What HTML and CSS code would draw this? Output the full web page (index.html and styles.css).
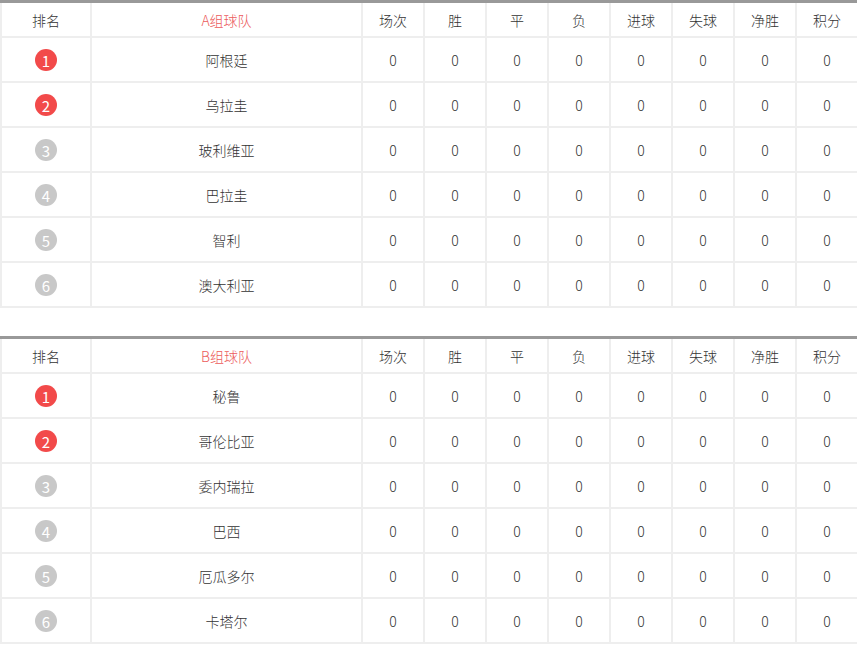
FILE: index.html
```html
<!DOCTYPE html>
<html lang="zh">
<head>
<meta charset="utf-8">
<title>积分榜</title>
<link rel="stylesheet" href="styles.css">
</head>
<body>
<div class="page">
  <table class="standings">
    <colgroup>
      <col class="c-rank"><col class="c-team"><col class="c-num"><col class="c-num"><col class="c-num"><col class="c-num"><col class="c-num"><col class="c-num"><col class="c-num"><col class="c-num">
    </colgroup>
    <thead>
      <tr><th>排名</th><th class="group">A组球队</th><th>场次</th><th>胜</th><th>平</th><th>负</th><th>进球</th><th>失球</th><th>净胜</th><th>积分</th></tr>
    </thead>
    <tbody>
      <tr><td><span class="badge hot">1</span></td><td>阿根廷</td><td>0</td><td>0</td><td>0</td><td>0</td><td>0</td><td>0</td><td>0</td><td>0</td></tr>
      <tr><td><span class="badge hot">2</span></td><td>乌拉圭</td><td>0</td><td>0</td><td>0</td><td>0</td><td>0</td><td>0</td><td>0</td><td>0</td></tr>
      <tr><td><span class="badge">3</span></td><td>玻利维亚</td><td>0</td><td>0</td><td>0</td><td>0</td><td>0</td><td>0</td><td>0</td><td>0</td></tr>
      <tr><td><span class="badge">4</span></td><td>巴拉圭</td><td>0</td><td>0</td><td>0</td><td>0</td><td>0</td><td>0</td><td>0</td><td>0</td></tr>
      <tr><td><span class="badge">5</span></td><td>智利</td><td>0</td><td>0</td><td>0</td><td>0</td><td>0</td><td>0</td><td>0</td><td>0</td></tr>
      <tr><td><span class="badge">6</span></td><td>澳大利亚</td><td>0</td><td>0</td><td>0</td><td>0</td><td>0</td><td>0</td><td>0</td><td>0</td></tr>
    </tbody>
  </table>
  <table class="standings">
    <colgroup>
      <col class="c-rank"><col class="c-team"><col class="c-num"><col class="c-num"><col class="c-num"><col class="c-num"><col class="c-num"><col class="c-num"><col class="c-num"><col class="c-num">
    </colgroup>
    <thead>
      <tr><th>排名</th><th class="group">B组球队</th><th>场次</th><th>胜</th><th>平</th><th>负</th><th>进球</th><th>失球</th><th>净胜</th><th>积分</th></tr>
    </thead>
    <tbody>
      <tr><td><span class="badge hot">1</span></td><td>秘鲁</td><td>0</td><td>0</td><td>0</td><td>0</td><td>0</td><td>0</td><td>0</td><td>0</td></tr>
      <tr><td><span class="badge hot">2</span></td><td>哥伦比亚</td><td>0</td><td>0</td><td>0</td><td>0</td><td>0</td><td>0</td><td>0</td><td>0</td></tr>
      <tr><td><span class="badge">3</span></td><td>委内瑞拉</td><td>0</td><td>0</td><td>0</td><td>0</td><td>0</td><td>0</td><td>0</td><td>0</td></tr>
      <tr><td><span class="badge">4</span></td><td>巴西</td><td>0</td><td>0</td><td>0</td><td>0</td><td>0</td><td>0</td><td>0</td><td>0</td></tr>
      <tr><td><span class="badge">5</span></td><td>厄瓜多尔</td><td>0</td><td>0</td><td>0</td><td>0</td><td>0</td><td>0</td><td>0</td><td>0</td></tr>
      <tr><td><span class="badge">6</span></td><td>卡塔尔</td><td>0</td><td>0</td><td>0</td><td>0</td><td>0</td><td>0</td><td>0</td><td>0</td></tr>
    </tbody>
  </table>
</div>
</body>
</html>
```
FILE: styles.css
```css
html, body {
  margin: 0;
  padding: 0;
  background: #fff;
}
body {
  font-family: "Noto Sans CJK SC", "Noto Sans", sans-serif;
  font-size: 14px;
  font-weight: 300;
  color: #333;
}
.page {
  display: flex;
  flex-direction: column;
  gap: 28px;
}
.standings {
  width: 857px;
  table-layout: fixed;
  border-collapse: collapse;
  border-top: 3px solid #999;
}
.c-rank { width: 90px; }
.c-team { width: 271px; }
.c-num { width: 62px; }
.standings th,
.standings td {
  border: 2px solid #eee;
  text-align: center;
  padding: 0;
  font-weight: 300;
  line-height: 20px;
}
.standings th {
  height: 33px;
  border-top: 0;
}
.standings td {
  height: 43px;
}
.standings th.group {
  color: #ec5b5b;
}
.badge {
  display: inline-flex;
  align-items: center;
  justify-content: center;
  width: 22px;
  height: 22px;
  border-radius: 50%;
  background: #c8c8c8;
  color: #fff;
  font-size: 15px;
  font-weight: 400;
  line-height: 1;
  vertical-align: middle;
}
.badge.hot {
  background: #f24a4a;
}
```
